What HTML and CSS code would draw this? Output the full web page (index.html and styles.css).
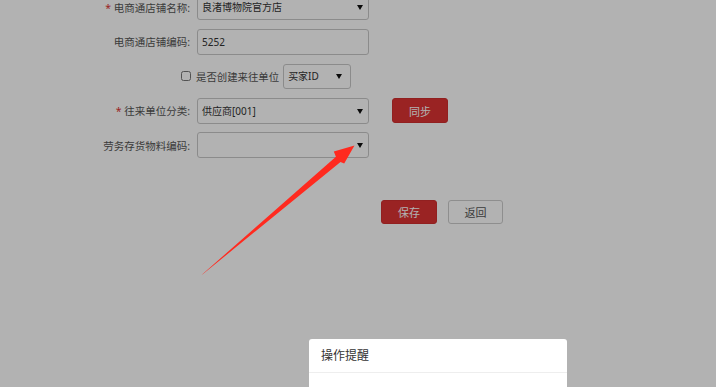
FILE: index.html
```html
<!DOCTYPE html>
<html>
<head>
<meta charset="utf-8">
<title>往来单位设置</title>
<link rel="stylesheet" href="styles.css">
</head>
<body>

<div class="form">
  <div class="row">
    <label class="label"><span class="req">*</span> 电商通店铺名称:</label>
    <span class="select wide"><select><option>良渚博物院官方店</option></select></span>
  </div>
  <div class="row">
    <label class="label">电商通店铺编码:</label>
    <input class="input wide" type="text" value="5252">
  </div>
  <div class="row check-row">
    <label class="check"><input type="checkbox"> 是否创建来往单位</label>
    <span class="select small"><select><option>买家ID</option></select></span>
  </div>
  <div class="row">
    <label class="label"><span class="req">*</span> 往来单位分类:</label>
    <span class="select wide"><select><option>供应商[001]</option></select></span>
    <button class="btn btn-red sync">同步</button>
  </div>
  <div class="row">
    <label class="label">劳务存货物料编码:</label>
    <span class="select wide"><select><option></option></select></span>
  </div>
  <div class="actions">
    <button class="btn btn-red">保存</button>
    <button class="btn btn-plain">返回</button>
  </div>
</div>

<div class="mask"></div>

<div class="dialog">
  <div class="dialog-title">操作提醒</div>
  <div class="dialog-body"></div>
</div>

<!-- annotation arrow drawn over the screenshot -->
<svg class="arrow" width="716" height="387" viewBox="0 0 716 387">
  <polygon points="201.5,275 203,274 340.5,162.1 344.2,163.6 354.5,145.5 333.8,151.6 335.9,156.7" fill="#ff2a1f"/>
</svg>

</body>
</html>
```

FILE: styles.css
```css
body { margin: 0; background-color: #fff; color: #333; font-family: "Noto Sans", "Noto Sans CJK SC", sans-serif; overflow: hidden; }

.form { margin-top: -6px; }
.row { display: flex; align-items: center; height: 26px; margin-bottom: 8.5px; }
.label { width: 190px; margin-right: 7px; text-align: right; font-size: 10.5px; color: #555; white-space: nowrap; }
.req { color: #d33; }

.input, .select select {
  box-sizing: border-box; height: 26px; border: 1px solid #c8c8c8; border-radius: 3px; background: #fff;
  font-family: inherit; font-size: 10px; color: #333; padding: 0 4px; outline: none;
}
.wide { width: 172px; }
.select { position: relative; display: block; }
.select select { width: 100%; appearance: none; -webkit-appearance: none; }
.select::after {
  content: ""; position: absolute; right: 6px; top: 11px;
  border-left: 3px solid transparent; border-right: 3px solid transparent; border-top: 5px solid #111;
  pointer-events: none;
}
.select.small { width: 68px; }
.select.small select { height: 25px; }
.select.small::after { right: 9px; }

.check-row { padding-left: 181px; }
.check { display: flex; align-items: center; font-size: 10.4px; color: #555; margin-right: 4px; white-space: nowrap; }
.check input { width: 10px; height: 10px; margin: 0 5px 0 0; }

.btn { box-sizing: border-box; width: 56px; height: 25px; border-radius: 3px; font-family: inherit; font-size: 11px; cursor: pointer; }
.btn-red { background: #dd3333; border: 1px solid #d02e2e; color: #fff; }
.btn-plain { background: #fff; border: 1px solid #ccc; color: #555; width: 55px; }
.sync { margin-left: 23px; }

.actions { display: flex; gap: 11px; padding-left: 381px; margin-top: 42px; }
.actions .btn { height: 24px; }

/* dark layer under the dialog */
.mask { position: fixed; top: 0; left: 0; right: 0; bottom: 0; background: rgba(0, 0, 0, 0.3); z-index: 1; }

.dialog { position: fixed; left: 309px; top: 339px; width: 258px; height: 80px; background: #fff; border-radius: 3px; z-index: 2; }
.dialog-title { height: 33px; line-height: 33px; padding: 0 12px; font-size: 12px; color: #333; border-bottom: 1px solid #eee; }

.arrow { position: fixed; top: 0; left: 0; z-index: 3; pointer-events: none; }
```
